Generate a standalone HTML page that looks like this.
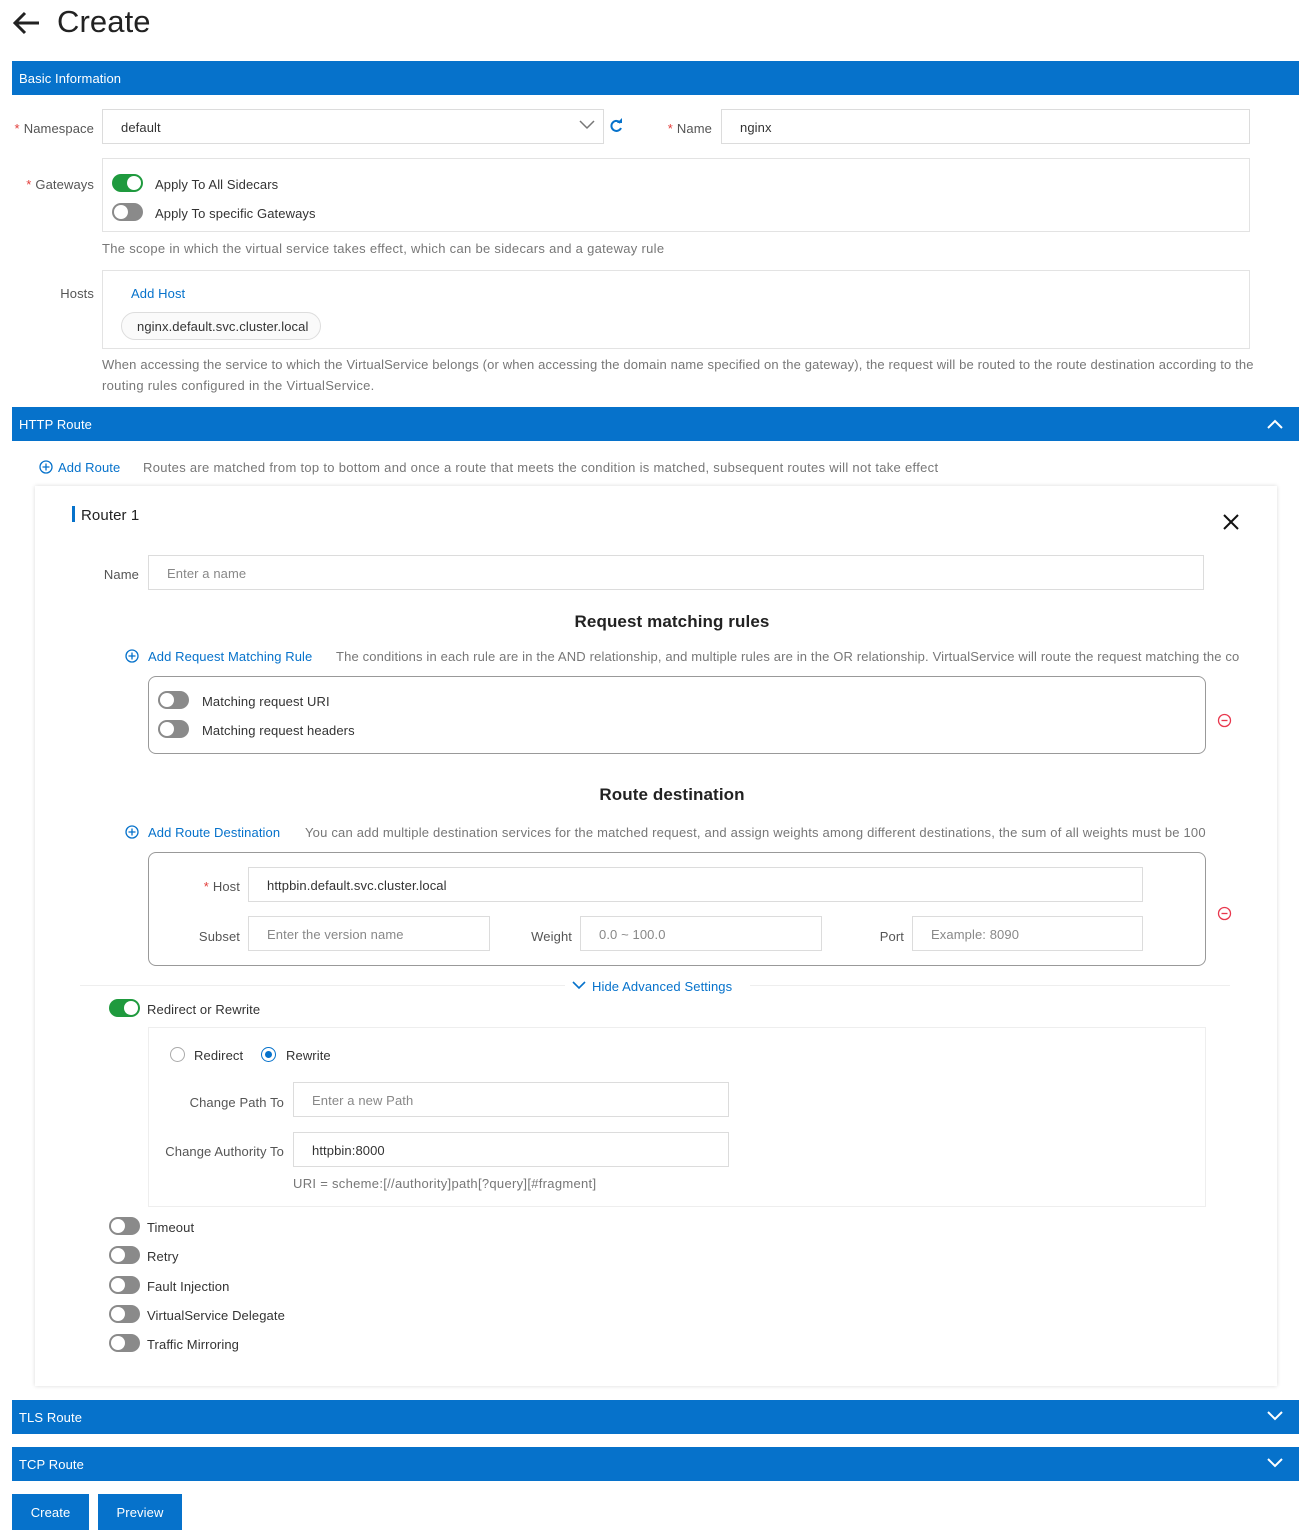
<!DOCTYPE html>
<html><head><meta charset="utf-8"><style>
*{box-sizing:border-box;margin:0;padding:0}
body{width:1304px;height:1533px;background:#fff;font-family:"Liberation Sans",sans-serif;font-size:13px;color:#333;position:relative;overflow:hidden;letter-spacing:0.1px}
.a{position:absolute;white-space:nowrap}
.bar{position:absolute;left:12px;width:1287px;height:34px;background:#0672cb;color:#fff;font-size:13px;line-height:36px;padding-left:7px}
.inp{position:absolute;border:1px solid #dcdcdc;background:#fff;height:35px;line-height:35px;padding-left:18px;color:#333}
.ph{color:#888}
.lbl{position:absolute;text-align:right;color:#555;white-space:nowrap;margin-top:1px}
.req{color:#e23c39;margin-right:4px}
.tg{position:absolute;width:31px;height:18px;border-radius:9px;background:#8a8a8a}
.tg::after{content:"";position:absolute;left:2px;top:2px;width:14px;height:14px;border-radius:50%;background:#fff}
.tg.on{background:#1f9a3e}
.tg.on::after{left:auto;right:2px}
.blue{color:#0672cb}
.help{color:#777;letter-spacing:0.3px}
.box{position:absolute;border:1px solid #e3e3e3}
.rbox{position:absolute;border:1px solid #999;border-radius:8px}
.h2{position:absolute;font-size:17px;font-weight:bold;color:#222;text-align:center;margin-top:1px}
.t{margin-top:1px}
</style></head><body>

<svg class="a" style="left:12px;top:10px" width="30" height="26" viewBox="0 0 30 26"><path d="M27 13H3M13 3L3 13l10 10" fill="none" stroke="#222" stroke-width="3"/></svg>
<div class="a" style="left:57px;top:4px;font-size:31px;color:#222">Create</div>

<div class="bar" style="top:61px">Basic Information</div>

<div class="lbl" style="right:1210px;top:120px"><span class="req">*</span>Namespace</div>
<div class="inp" style="left:102px;top:109px;width:502px">default</div>
<svg class="a" style="left:579px;top:119px" width="16" height="12"><path d="M1 2l7 7 7-7" fill="none" stroke="#777" stroke-width="1.5"/></svg>
<svg class="a" style="left:608px;top:118px" width="16" height="16" viewBox="0 0 16 16"><path d="M12.5 5A5 5 0 1 0 13 10" fill="none" stroke="#0672cb" stroke-width="2"/><path d="M9 5h5V0z" fill="#0672cb"/></svg>
<div class="lbl" style="right:592px;top:120px"><span class="req">*</span>Name</div>
<div class="inp" style="left:721px;top:109px;width:529px">nginx</div>

<div class="lbl" style="right:1210px;top:176px"><span class="req">*</span>Gateways</div>
<div class="box" style="left:102px;top:158px;width:1148px;height:74px"></div>
<div class="tg on" style="left:112px;top:174px"></div><div class="a t" style="left:155px;top:176px">Apply To All Sidecars</div>
<div class="tg" style="left:112px;top:203px"></div><div class="a t" style="left:155px;top:205px">Apply To specific Gateways</div>
<div class="a help" style="left:102px;top:241px">The scope in which the virtual service takes effect, which can be sidecars and a gateway rule</div>

<div class="lbl" style="right:1210px;top:285px">Hosts</div>
<div class="box" style="left:102px;top:270px;width:1148px;height:79px"></div>
<div class="a blue t" style="left:131px;top:285px">Add Host</div>
<div class="a" style="left:121px;top:312px;width:200px;height:28px;border:1px solid #ddd;border-radius:14px;background:#fafafa;line-height:28px;padding-left:15px">nginx.default.svc.cluster.local</div>
<div class="a help" style="left:102px;top:357px;letter-spacing:0.15px">When accessing the service to which the VirtualService belongs (or when accessing the domain name specified on the gateway), the request will be routed to the route destination according to the</div>
<div class="a help" style="left:102px;top:378px">routing rules configured in the VirtualService.</div>

<div class="bar" style="top:407px">HTTP Route</div>
<svg class="a" style="left:1267px;top:419px" width="16" height="10"><path d="M1 9l7-7 7 7" fill="none" stroke="#fff" stroke-width="2"/></svg>

<svg class="a" style="left:39px;top:460px" width="14" height="14" viewBox="0 0 14 14"><circle cx="7" cy="7" r="6" fill="none" stroke="#0672cb" stroke-width="1.3"/><path d="M3.5 7h7M7 3.5v7" stroke="#0672cb" stroke-width="1.3"/></svg>
<div class="a blue" style="left:58px;top:460px">Add Route</div>
<div class="a help" style="left:143px;top:460px">Routes are matched from top to bottom and once a route that meets the condition is matched, subsequent routes will not take effect</div>

<div class="a" style="left:35px;top:486px;width:1242px;height:900px;background:#fff;box-shadow:0 0 4px rgba(0,0,0,.15)"></div>
<div class="a" style="left:72px;top:506px;width:3px;height:16px;background:#0672cb"></div>
<div class="a" style="left:81px;top:507px;font-size:15px;color:#222">Router 1</div>
<svg class="a" style="left:1223px;top:514px" width="16" height="16"><path d="M1 1l14 14M15 1L1 15" stroke="#111" stroke-width="2"/></svg>

<div class="lbl" style="right:1165px;top:566px">Name</div>
<div class="inp ph" style="left:148px;top:555px;width:1056px">Enter a name</div>

<div class="h2" style="left:472px;width:400px;top:611px">Request matching rules</div>
<svg class="a" style="left:125px;top:649px" width="14" height="14" viewBox="0 0 14 14"><circle cx="7" cy="7" r="6" fill="none" stroke="#0672cb" stroke-width="1.3"/><path d="M3.5 7h7M7 3.5v7" stroke="#0672cb" stroke-width="1.3"/></svg>
<div class="a blue" style="left:148px;top:649px">Add Request Matching Rule</div>
<div class="a help" style="left:336px;top:649px;width:904px;overflow:hidden;letter-spacing:0.15px">The conditions in each rule are in the AND relationship, and multiple rules are in the OR relationship. VirtualService will route the request matching the conditions</div>
<div class="rbox" style="left:148px;top:676px;width:1058px;height:78px"></div>
<div class="tg" style="left:158px;top:691px"></div><div class="a t" style="left:202px;top:693px">Matching request URI</div>
<div class="tg" style="left:158px;top:720px"></div><div class="a t" style="left:202px;top:722px">Matching request headers</div>
<svg class="a" style="left:1217px;top:713px" width="15" height="15"><circle cx="7.5" cy="7.5" r="6" fill="none" stroke="#e8374d" stroke-width="1.3"/><path d="M4.5 7.5h6" stroke="#e8374d" stroke-width="1.3"/></svg>

<div class="h2" style="left:472px;width:400px;top:784px">Route destination</div>
<svg class="a" style="left:125px;top:825px" width="14" height="14" viewBox="0 0 14 14"><circle cx="7" cy="7" r="6" fill="none" stroke="#0672cb" stroke-width="1.3"/><path d="M3.5 7h7M7 3.5v7" stroke="#0672cb" stroke-width="1.3"/></svg>
<div class="a blue" style="left:148px;top:825px">Add Route Destination</div>
<div class="a help" style="left:305px;top:825px;letter-spacing:0.2px">You can add multiple destination services for the matched request, and assign weights among different destinations, the sum of all weights must be 100</div>
<div class="rbox" style="left:148px;top:852px;width:1058px;height:114px"></div>
<div class="lbl" style="right:1064px;top:878px"><span class="req">*</span>Host</div>
<div class="inp" style="left:248px;top:867px;width:895px">httpbin.default.svc.cluster.local</div>
<div class="lbl" style="right:1064px;top:928px">Subset</div>
<div class="inp ph" style="left:248px;top:916px;width:242px">Enter the version name</div>
<div class="lbl" style="right:732px;top:928px">Weight</div>
<div class="inp ph" style="left:580px;top:916px;width:242px">0.0 ~ 100.0</div>
<div class="lbl" style="right:400px;top:928px">Port</div>
<div class="inp ph" style="left:912px;top:916px;width:231px">Example: 8090</div>
<svg class="a" style="left:1217px;top:906px" width="15" height="15"><circle cx="7.5" cy="7.5" r="6" fill="none" stroke="#e8374d" stroke-width="1.3"/><path d="M4.5 7.5h6" stroke="#e8374d" stroke-width="1.3"/></svg>

<div class="a" style="left:80px;top:985px;width:1150px;height:1px;background:#eee"></div>
<div class="a" style="left:565px;top:977px;width:185px;height:18px;background:#fff"></div>
<svg class="a" style="left:572px;top:981px" width="14" height="10"><path d="M1 1l6 6 6-6" fill="none" stroke="#0672cb" stroke-width="1.6"/></svg>
<div class="a blue" style="left:592px;top:979px">Hide Advanced Settings</div>

<div class="tg on" style="left:109px;top:999px"></div><div class="a t" style="left:147px;top:1001px">Redirect or Rewrite</div>
<div class="box" style="left:148px;top:1027px;width:1058px;height:180px;border-color:#eee"></div>
<div class="a" style="left:170px;top:1047px;width:15px;height:15px;border:1px solid #aaa;border-radius:50%"></div>
<div class="a t" style="left:194px;top:1047px">Redirect</div>
<div class="a" style="left:261px;top:1047px;width:15px;height:15px;border:1px solid #0672cb;border-radius:50%"><div style="margin:3px;width:7px;height:7px;border-radius:50%;background:#0672cb"></div></div>
<div class="a t" style="left:286px;top:1047px">Rewrite</div>
<div class="lbl" style="right:1020px;top:1094px">Change Path To</div>
<div class="inp ph" style="left:293px;top:1082px;width:436px">Enter a new Path</div>
<div class="lbl" style="right:1020px;top:1143px">Change Authority To</div>
<div class="inp" style="left:293px;top:1132px;width:436px">httpbin:8000</div>
<div class="a help" style="left:293px;top:1176px">URI = scheme:[//authority]path[?query][#fragment]</div>

<div class="tg" style="left:109px;top:1217px"></div><div class="a t" style="left:147px;top:1219px">Timeout</div>
<div class="tg" style="left:109px;top:1246px"></div><div class="a t" style="left:147px;top:1248px">Retry</div>
<div class="tg" style="left:109px;top:1276px"></div><div class="a t" style="left:147px;top:1278px">Fault Injection</div>
<div class="tg" style="left:109px;top:1305px"></div><div class="a t" style="left:147px;top:1307px">VirtualService Delegate</div>
<div class="tg" style="left:109px;top:1334px"></div><div class="a t" style="left:147px;top:1336px">Traffic Mirroring</div>

<div class="bar" style="top:1400px">TLS Route</div>
<svg class="a" style="left:1267px;top:1411px" width="16" height="10"><path d="M1 1l7 7 7-7" fill="none" stroke="#fff" stroke-width="2"/></svg>
<div class="bar" style="top:1447px">TCP Route</div>
<svg class="a" style="left:1267px;top:1458px" width="16" height="10"><path d="M1 1l7 7 7-7" fill="none" stroke="#fff" stroke-width="2"/></svg>

<div class="a" style="left:12px;top:1494px;width:77px;height:36px;background:#0672cb;color:#fff;text-align:center;line-height:37px">Create</div>
<div class="a" style="left:98px;top:1494px;width:84px;height:36px;background:#0672cb;color:#fff;text-align:center;line-height:37px">Preview</div>
</body></html>
